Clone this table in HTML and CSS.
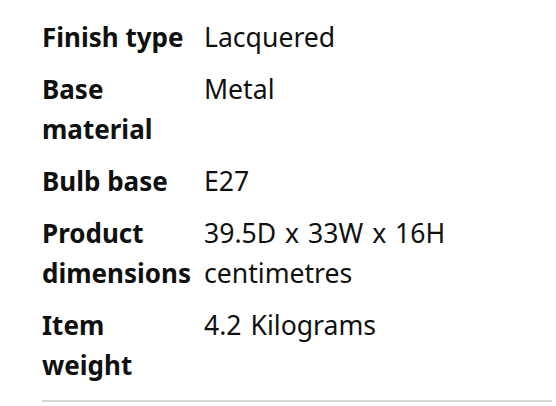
FILE: index.html
```html
<!DOCTYPE html>
<html>
<head>
<meta charset="utf-8">
<link rel="stylesheet" href="styles.css">
</head>
<body>
<div class="specs">
  <table class="spec-table">
    <tr><th>Finish type</th><td>Lacquered</td></tr>
    <tr><th>Base material</th><td>Metal</td></tr>
    <tr><th>Bulb base</th><td>E27</td></tr>
    <tr><th>Product dimensions</th><td>39.5D x 33W x 16H centimetres</td></tr>
    <tr><th>Item weight</th><td>4.2 Kilograms</td></tr>
  </table>
  <hr class="divider">
</div>
</body>
</html>
```
FILE: styles.css
```css
html, body {
  margin: 0;
  padding: 0;
  background: #ffffff;
}
body {
  font-family: "Noto Sans", "Open Sans", sans-serif;
  color: #0f1111;
}
.specs {
  padding: 11px 4px 0 42px;
}
.spec-table {
  border-collapse: collapse;
  font-size: 26px;
  line-height: 40px;
}
.spec-table th {
  text-align: left;
  font-weight: 700;
  vertical-align: top;
  padding: 6px 12px 6px 0;
  width: 150px;
}
.spec-table td {
  vertical-align: top;
  padding: 6px 0;
  width: 280px;
  font-size: 26.6px;
  word-spacing: 2px;
}
.divider {
  border: 0;
  border-top: 2px solid #d5d9d9;
  margin: 9px 0 0 0;
}
```
